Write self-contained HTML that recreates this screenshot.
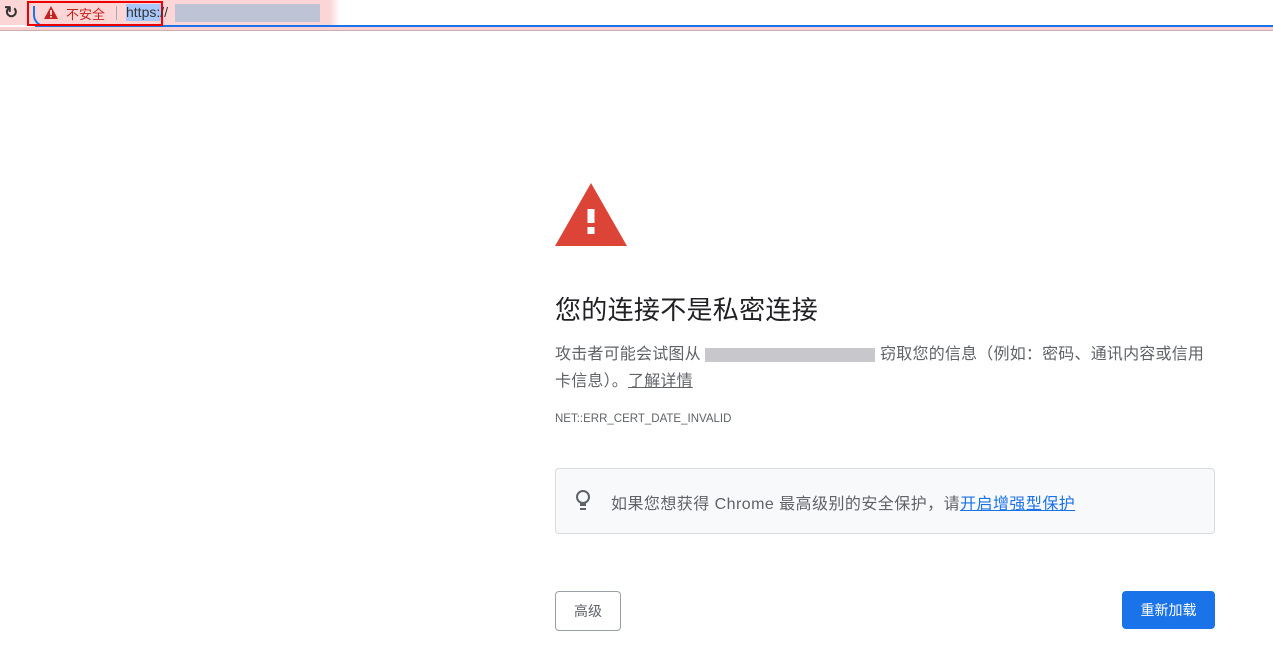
<!DOCTYPE html>
<html><head><meta charset="utf-8"><style>
body{margin:0;width:1273px;height:659px;background:#fff;position:relative;overflow:hidden;font-family:"Liberation Sans","Noto Sans CJK SC",sans-serif;}
.a{position:absolute}
.t{color:#202124}
</style></head><body>
<div class="a" style="left:0;top:0;width:1273px;height:25px;background:linear-gradient(90deg,#fcd6d6 0,#fcd6d6 330px,#fff 340px)"></div>
<div class="a" style="left:35px;top:25px;width:1238px;height:2px;background:#1a73e8"></div>
<div class="a" style="left:33px;top:6px;width:12px;height:19px;border-left:2px solid #1a73e8;border-bottom:2px solid #1a73e8;border-radius:0 0 0 12px;"></div>
<div class="a" style="left:0;top:27px;width:1273px;height:3px;background:#fcd0d0"></div>
<div class="a" style="left:0;top:30px;width:1273px;height:1px;background:#c9b0b0"></div>
<div class="a" style="left:4px;top:3px;font-size:17px;font-weight:bold;color:#333">&#x21bb;</div>
<div class="a" style="left:27px;top:1px;width:136px;height:25px;border:2px solid #e00;box-sizing:border-box"></div>
<svg class="a" style="left:44px;top:6px" width="14" height="13"><path d="M7 0L14 13H0Z" fill="#c5221f"/><rect x="6.2" y="4" width="1.6" height="5" fill="#fff"/><rect x="6.2" y="10" width="1.6" height="1.6" fill="#fff"/></svg>
<div class="a" style="left:66px;top:4px;font-size:13px;color:#c5221f">不安全</div>
<div class="a" style="left:116px;top:6px;width:1px;height:14px;background:#aaa"></div>
<div class="a" style="left:126px;top:4px;width:35px;height:17px;background:#a8c7fa"></div>
<div class="a" style="left:126px;top:4px;font-size:14px;color:#333">https://</div>
<div class="a" style="left:175px;top:4px;width:145px;height:18px;background:#aebfd6;opacity:.8"></div>
<svg class="a" style="left:555px;top:183px" width="72" height="63"><path d="M36 0L72 63H0Z" fill="#db4437"/><rect x="32.5" y="26" width="7" height="14" fill="#fff"/><rect x="32.5" y="44" width="7" height="7" fill="#fff"/></svg>
<div class="a t" style="left:555px;top:290px;font-size:26px;letter-spacing:0.3px">您的连接不是私密连接</div>
<div class="a" style="left:555px;top:341px;font-size:16px;line-height:27px;color:#5f6368;width:650px;letter-spacing:0.2px">攻击者可能会试图从 <span style="display:inline-block;width:170px;height:14px;background:#c8c8cc;vertical-align:middle"></span> 窃取您的信息（例如：密码、通讯内容或信用卡信息）。<span style="text-decoration:underline;color:#5f6368">了解详情</span></div>
<div class="a" style="left:555px;top:413px;font-size:11.5px;color:#5f6368">NET::ERR_CERT_DATE_INVALID</div>
<div class="a" style="left:555px;top:468px;width:660px;height:66px;box-sizing:border-box;border:1px solid #dadce0;border-radius:4px;background:#f8f9fa"></div>
<svg class="a" style="left:574px;top:489px" width="18" height="24"><circle cx="9" cy="8" r="6" fill="none" stroke="#5f6368" stroke-width="2"/><rect x="6" y="14" width="6" height="3" fill="#5f6368"/><rect x="6" y="19" width="6" height="2" fill="#5f6368"/></svg>
<div class="a" style="left:611px;top:490px;font-size:16px;color:#5f6368;letter-spacing:0.45px">如果您想获得 Chrome 最高级别的安全保护，请<span style="color:#1a73e8;text-decoration:underline">开启增强型保护</span></div>
<div class="a" style="left:555px;top:591px;width:66px;height:40px;box-sizing:border-box;border:1px solid #9aa0a6;border-radius:4px;font-size:14px;color:#5f6368;text-align:center;line-height:38px">高级</div>
<div class="a" style="left:1122px;top:591px;width:93px;height:38px;border-radius:4px;background:#1a73e8;color:#fff;font-size:14px;text-align:center;line-height:38px">重新加载</div>
</body></html>
